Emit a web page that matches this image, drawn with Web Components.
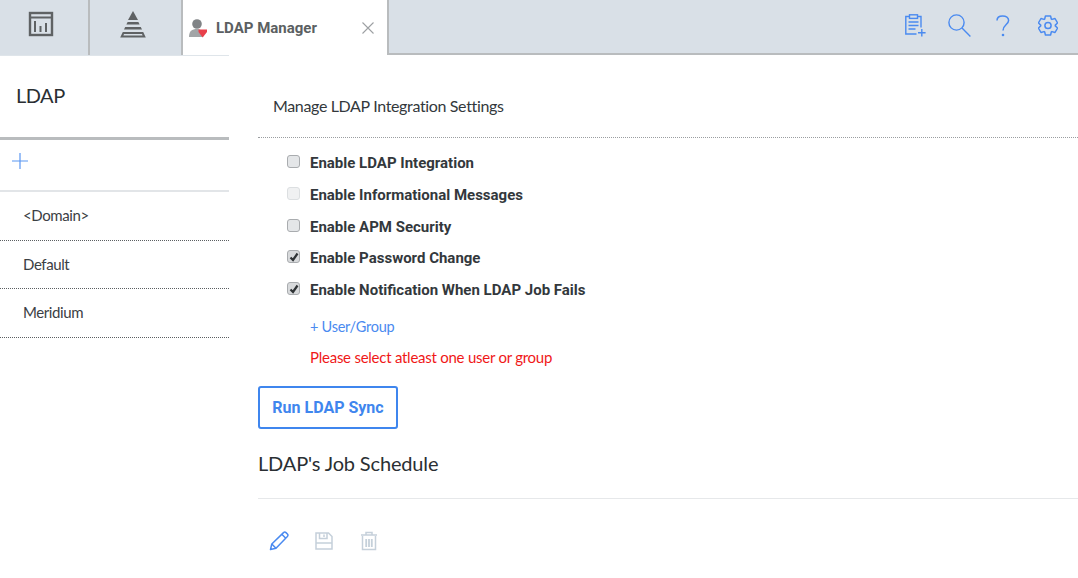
<!DOCTYPE html>
<html>
<head>
<meta charset="utf-8">
<title>LDAP Manager</title>
<style>
  html, body { margin: 0; padding: 0; background: #fff; }
  body { width: 1078px; height: 578px; overflow: hidden; font-family: Lato, Roboto, sans-serif; color: #2a2f33; }
</style>
</head>
<body>
<app-shell></app-shell>

<script>
// six flat teeth, one pointing straight up
function gearPath(cx, cy, outer, inner) {
  const pts = [];
  for (let i = 0; i < 6; i++) {
    const a = -90 + i * 60;
    [[inner, -27], [outer, -15], [outer, 15], [inner, 27]].forEach(([r, d]) => {
      const rad = ((a + d) * Math.PI) / 180;
      pts.push((cx + r * Math.cos(rad)).toFixed(2) + " " + (cy + r * Math.sin(rad)).toFixed(2));
    });
  }
  return "M" + pts.join("L") + "Z";
}

class AppTabbar extends HTMLElement {
  constructor() {
    super();
    this.attachShadow({ mode: "open" });
  }
  connectedCallback() {
    this.shadowRoot.innerHTML = `
      <style>
        :host { display: flex; height: 55px; background: #d9e0e7; box-sizing: border-box; }
        .tab { box-sizing: border-box; height: 55px; display: flex; align-items: center; justify-content: center; border-right: 2px solid #b9bcbe; }
        .t1 { width: 90px; padding: 0 6px 7px 0; }
        .t2 { width: 93px; padding: 0 6px 7px 0; }
        .active { width: 206px; background: #fff; justify-content: flex-start; padding-left: 6px; position: relative; }
        .name { font-family: Roboto, sans-serif; font-size: 15px; font-weight: 700; color: #5b5f62; margin-left: 8px; }
        .close { position: absolute; left: 178px; top: 21px; }
        .fill { flex: 1; display: flex; justify-content: flex-end; align-items: center; padding: 0 20px 2px 0; border-bottom: 2px solid #b9bcbe; }
        svg { display: block; }
        .clip { margin-right: 22px; }
        .find { margin-right: 25px; }
        .help { margin-right: 28px; }
      </style>
      <div class="tab t1">
        <svg width="26" height="26" viewBox="0 0 26 26" fill="none" stroke="#5f6264" stroke-width="2.4">
          <rect x="2" y="2" width="22" height="22"/><path d="M2 6.5H24" stroke-width="2"/>
          <path d="M7 10V21M12.5 15V21M18 12V21" stroke-width="2"/>
        </svg>
      </div>
      <div class="tab t2">
        <svg width="26" height="27" viewBox="0 0 26 27" fill="#5f6264">
          <path d="M13 0L18 9H8Z"/><path d="M7.6 11H18.4L19.6 13.5H6.4Z"/><path d="M5.2 16H20.8L22 18.5H4Z"/>
          <path d="M2.8 21H23.2L25.8 26.6H.2ZM4 23L3.4 24.6H22.6L22 23Z" fill-rule="evenodd"/>
        </svg>
      </div>
      <div class="tab active">
        <svg width="19" height="20" viewBox="0 0 19 20">
          <circle cx="8" cy="6" r="4.8" fill="#808386"/><path d="M0 19C0 13 3 11 8 11C12 11 14 13 14 19Z" fill="#a2a5a7"/>
          <path d="M9.5 11.5H18V14L13.7 19.5L9.5 14Z" fill="#e8404a"/>
        </svg>
        <span class="name">LDAP Manager</span>
        <svg class="close" width="14" height="14" viewBox="0 0 14 14" stroke="#9da0a3" stroke-width="1.1"><path d="M1.5 1.5L12.5 12.5M12.5 1.5L1.5 12.5"/></svg>
      </div>
      <div class="fill">
        <svg class="clip" width="21" height="23" viewBox="0 0 21 23" fill="none" stroke="#4a8af0" stroke-width="1.4">
          <path d="M4.5 2.5H.8V20H11.5M12.5 2.5H16V13.5"/><rect x="4.5" y=".8" width="8" height="3.6"/>
          <path d="M3.5 8H13.5M3.5 11.5H13.5M3.5 15H10.5M16.8 15V22.6M13 18.8H20.6"/>
        </svg>
        <svg class="find" width="23" height="23" viewBox="0 0 23 23" fill="none" stroke="#4a8af0" stroke-width="1.4">
          <circle cx="8.5" cy="8.5" r="7.6"/><path d="M14 14L22.4 22.4"/>
        </svg>
        <svg class="help" width="14" height="22" viewBox="0 0 14 22" fill="none" stroke="#4a8af0" stroke-width="1.5">
          <path d="M1 5.5C1 2.5 3.2.9 6.6.9C10 .9 12.6 2.7 12.6 5.6C12.6 9.4 7 10 7 15.5"/>
          <circle cx="7" cy="20" r="1.3" fill="#4a8af0" stroke="none"/>
        </svg>
        <svg width="20" height="21" viewBox="0 0 20 21" fill="none" stroke="#4a8af0" stroke-width="1.5" stroke-linejoin="round">
          <circle cx="10" cy="10.5" r="3.1"/>
          <path d="${gearPath(10, 10.5, 9.9, 7.3)}"/>
        </svg>
      </div>
    `;
  }
}

class SideNav extends HTMLElement {
  constructor() {
    super();
    this.attachShadow({ mode: "open" });
  }
  connectedCallback() {
    const items = ["&lt;Domain&gt;", "Default", "Meridium"];
    this.shadowRoot.innerHTML = `
      <style>
        :host { display: block; width: 229px; flex: none; border-top: 1px solid #dfe5ea; font-family: Lato, sans-serif; color: #2a2f33; }
        .title { height: 84px; box-sizing: border-box; padding: 26px 0 0 16px; font-size: 20px; letter-spacing: -.5px; line-height: 27px; border-bottom: 3px solid #b9bcbe; }
        .add { height: 52px; box-sizing: border-box; padding: 13px 0 0 12px; border-bottom: 2px solid #e2e5e8; }
        .add svg { display: block; }
        .item { height: 48.5px; box-sizing: border-box; padding: 13px 0 0 23px; font-size: 15px; letter-spacing: -.4px; line-height: 20px; border-bottom: 1px dotted #5b5f62; color: #3b4044; }
      </style>
      <div class="title">LDAP</div>
      <div class="add">
        <svg width="16" height="16" viewBox="0 0 16 16" stroke="#5b97f2" stroke-width="1.2"><path d="M8 0V16M0 8H16"/></svg>
      </div>
      ${items.map((i) => `<div class="item">${i}</div>`).join("")}
    `;
  }
}

class CheckRow extends HTMLElement {
  constructor() {
    super();
    this.attachShadow({ mode: "open" });
  }
  connectedCallback() {
    const checked = this.hasAttribute("checked");
    const disabled = this.hasAttribute("disabled");
    this.shadowRoot.innerHTML = `
      <style>
        :host { display: flex; height: 31.75px; align-items: flex-start; }
        .box { width: 13px; height: 13px; margin: 2px 10px 0 0; box-sizing: border-box; border: 1px solid ${disabled ? "#dcdfe1" : "#a9acaf"}; border-radius: 3px; background: ${disabled ? "#f0f1f2" : checked ? "#d8dadc" : "#e4e6e8"}; display: flex; align-items: center; justify-content: center; }
        .label { font-family: Roboto, sans-serif; font-size: 15px; font-weight: 700; line-height: 20px; color: #33383c; }
        svg { display: block; }
      </style>
      <div class="box">${checked ? `<svg width="10" height="10" viewBox="0 0 10 10" fill="none" stroke="#2f3336" stroke-width="2.2"><path d="M1.5 5.5L4 8L8.5 1.5"/></svg>` : ""}</div>
      <div class="label"><slot></slot></div>
    `;
  }
}

class ActionIcons extends HTMLElement {
  constructor() {
    super();
    this.attachShadow({ mode: "open" });
  }
  connectedCallback() {
    this.shadowRoot.innerHTML = `
      <style>
        :host { display: flex; gap: 25px; padding-left: 11px; }
        svg { display: block; }
      </style>
      <svg width="20" height="20" viewBox="0 0 20 20" fill="none" stroke="#4a8af0" stroke-width="1.5" stroke-linejoin="round">
        <path d="M1.5 18.5L2.8 13L14.5 1.6C15.3 .9 16.2 .9 17 1.6L18.4 3C19.1 3.8 19.1 4.7 18.4 5.5L7 17.2Z"/><path d="M2.8 13L7 17.2M12.8 3.3L16.8 7.2"/>
      </svg>
      <svg width="20" height="20" viewBox="0 0 20 20" fill="none" stroke="#c5d0da" stroke-width="1.5">
        <path d="M2 2H14.5L18 5.5V18H2Z"/><path d="M5.5 2V7.5H13V2M10 3.5V6"/><path d="M2 12H18"/>
      </svg>
      <svg width="20" height="20" viewBox="0 0 20 20" fill="none" stroke="#c5d0da" stroke-width="1.5">
        <path d="M3.5 5V18.5H16.5V5M2 4H18M7 4V1.5H13V4"/><path d="M7.2 8V16M10 8V16M12.8 8V16" stroke-width="1.8"/>
      </svg>
    `;
  }
}

class LdapSettings extends HTMLElement {
  constructor() {
    super();
    this.attachShadow({ mode: "open" });
  }
  connectedCallback() {
    this.shadowRoot.innerHTML = `
      <style>
        :host { display: block; flex: 1; padding: 0 0 0 29px; font-family: Lato, sans-serif; }
        .head { height: 83px; box-sizing: border-box; padding: 40px 0 0 15px; font-size: 16px; letter-spacing: -.35px; line-height: 22px; color: #33383c; border-bottom: 1px dotted #9a9da0; }
        .checks { padding: 15px 0 0 29px; }
        .sub { padding-left: 52px; font-size: 15px; line-height: 20px; }
        .link { color: #4a8af0; margin-top: 5px; font-size: 14.5px; letter-spacing: -.25px; }
        .err { color: #f01818; margin-top: 10px; letter-spacing: -.25px; }
        button { display: block; width: 140px; height: 43px; margin-top: 19px; padding: 0; box-sizing: border-box; background: #fff; border: 2px solid #3f86ee; border-radius: 3px; color: #3f86ee; font: 700 16px Roboto, sans-serif; }
        h2 { margin: 21px 0 0; font-size: 20px; font-weight: 400; letter-spacing: -.15px; line-height: 27px; color: #2a2f33; }
        .rule { height: 1px; background: #e6e8ea; margin: 21px 0 32px; }
      </style>
      <div class="head">Manage LDAP Integration Settings</div>
      <div class="checks">
        <check-row>Enable LDAP Integration</check-row>
        <check-row disabled>Enable Informational Messages</check-row>
        <check-row>Enable APM Security</check-row>
        <check-row checked>Enable Password Change</check-row>
        <check-row checked>Enable Notification When LDAP Job Fails</check-row>
      </div>
      <div class="sub link">+ User/Group</div>
      <div class="sub err">Please select atleast one user or group</div>
      <button>Run LDAP Sync</button>
      <h2>LDAP's Job Schedule</h2>
      <div class="rule"></div>
      <action-icons></action-icons>
    `;
  }
}

class AppShell extends HTMLElement {
  constructor() {
    super();
    this.attachShadow({ mode: "open" });
  }
  connectedCallback() {
    this.shadowRoot.innerHTML = `
      <style>
        :host { display: block; width: 1078px; height: 578px; }
        .body { display: flex; }
      </style>
      <app-tabbar></app-tabbar>
      <div class="body">
        <side-nav></side-nav>
        <ldap-settings></ldap-settings>
      </div>
    `;
  }
}

customElements.define("app-tabbar", AppTabbar);
customElements.define("side-nav", SideNav);
customElements.define("check-row", CheckRow);
customElements.define("action-icons", ActionIcons);
customElements.define("ldap-settings", LdapSettings);
customElements.define("app-shell", AppShell);
</script>
</body>
</html>
